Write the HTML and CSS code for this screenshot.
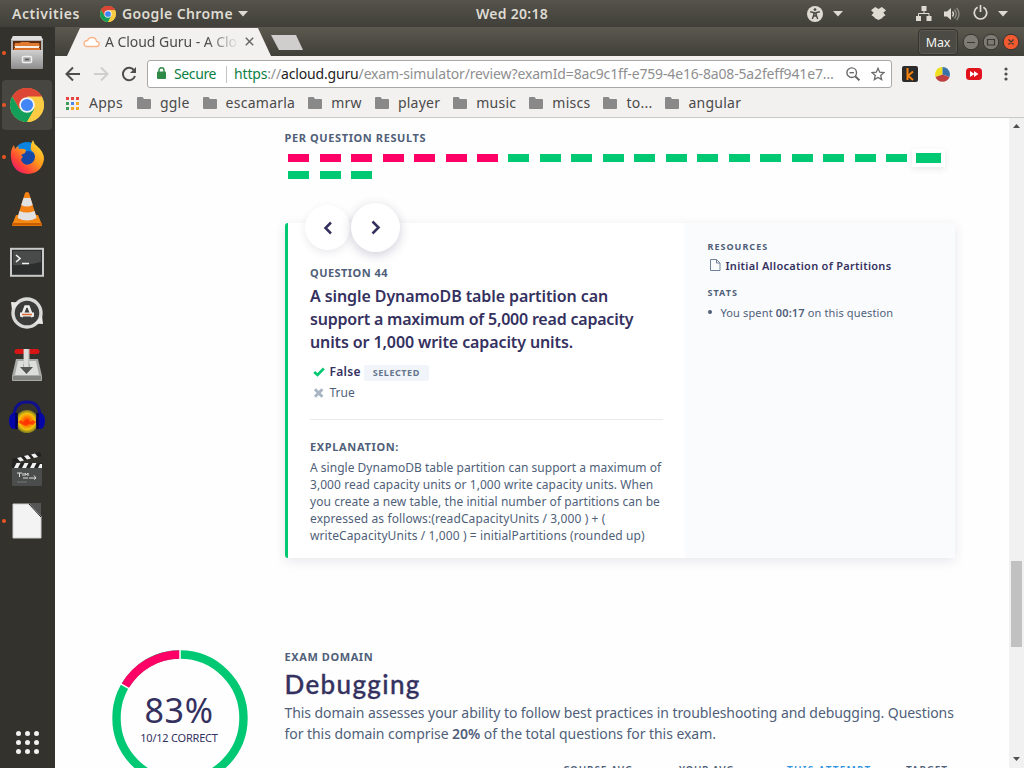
FILE: index.html
```html
<!DOCTYPE html>
<html lang="en">
<head>
<meta charset="utf-8">
<title>A Cloud Guru - A Cloud Guru</title>
<link rel="stylesheet" href="styles.css">
</head>
<body>
<svg class="defs" width="0" height="0">
  <symbol id="chrome" viewBox="0 0 34 34">
    <circle cx="17" cy="17" r="17" fill="#fccb44"/>
    <path d="M17 17 2.3 8.5A17 17 0 0 1 31.7 8.5Z" fill="#dd4535"/>
    <path d="M17 8.5H31.7A17 17 0 0 0 2.3 8.5L9.6 21.2Z" fill="#dd4535"/>
    <path d="M2.3 8.5A17 17 0 0 0 17 34L24.4 21.2 17 17 9.6 21.2Z" fill="#139f59"/>
    <path d="M17 34A17 17 0 0 0 31.7 8.5H17L24.4 21.2Z" fill="#fccb44"/>
    <circle cx="17" cy="17" r="7.8" fill="#f3f3f3"/>
    <circle cx="17" cy="17" r="6.1" fill="#4285f4"/>
  </symbol>
  <symbol id="folder" viewBox="0 0 14 12"><path d="M1 0h4.6L7 2h6q1 0 1 1v8q0 1-1 1H1q-1 0-1-1V1q0-1 1-1Z" fill="#898989"/></symbol>
</svg>

<header class="topbar">
  <span class="activities">Activities</span>
  <svg class="app-icon" width="16" height="16"><use href="#chrome"/></svg>
  <span class="app-name">Google Chrome</span>
  <svg class="caret" width="10" height="6"><path d="M0 0h10L5 5.5Z"/></svg>
  <span class="clock">Wed 20:18</span>
  <svg class="access" width="16" height="16" viewBox="0 0 16 16"><circle cx="8" cy="8" r="8" fill="#dfdbd2"/><circle cx="8" cy="3.6" r="1.4" fill="#4a4943"/><path d="M3.2 5.8 6.8 6.6V9L5.3 13M12.8 5.8 9.2 6.6V9L10.7 13M7 7h2v3H7Z" fill="none" stroke="#4a4943" stroke-width="1.4"/></svg>
  <svg class="caret caret-access" width="10" height="6"><path d="M0 0h10L5 5.5Z"/></svg>
  <svg class="dropbox" width="15" height="13" viewBox="0 0 15 13"><path d="M4.200 0 7.500 2 10.800 0 15 3.200 12.300 5.700 14.500 8.200 11.500 10.200V11L7.500 13 3.500 11V10.200L.5 8.200 2.700 5.700 0 3.200Z" fill="#dfdbd2"/></svg>
  <svg class="network" width="16" height="15" viewBox="0 0 16 15"><path d="M5.500 0h5v5h-5ZM0 10h5v5H0ZM10.500 10h5v5h-5Z" fill="#dfdbd2"/><path d="M8 5v2.500M2.500 10V7.500h10.500V10" fill="none" stroke="#dfdbd2"/></svg>
  <svg class="volume" width="16" height="14" viewBox="0 0 16 14"><path d="M0 4.500h3L7 1v12L3 9.500H0Z" fill="#dfdbd2"/><path d="M8.500 4.500q2 2.500 0 5" fill="none" stroke="#dfdbd2" stroke-width="1.300"/><path d="M10.500 2.500q3.500 4.500 0 9M12.700 .8q4.600 6.200 0 12.400" fill="none" stroke="#918f89" stroke-width="1.300"/></svg>
  <svg class="power" width="15" height="15" viewBox="0 0 15 15"><path d="M4.600 2.300a6.200 6.200 0 1 0 5.800 0M7.500 0v7" fill="none" stroke="#dfdbd2" stroke-width="1.700"/></svg>
  <svg class="caret caret-power" width="10" height="6"><path d="M0 0h10L5 5.500Z"/></svg>
</header>

<div class="desktop">
  <nav class="dock">
    <div class="tile running"><svg width="34" height="36" viewBox="0 0 34 36">
      <defs><linearGradient id="gm" x2="0" y2="1"><stop offset="0" stop-color="#d0d0d0"/><stop offset="1" stop-color="#8d8d8d"/></linearGradient></defs>
      <path d="M3 1h28l2 4v27q0 2-2 2H3q-2 0-2-2V5Z" fill="#b5b5b5"/><path d="M3 1h28l2 4H1Z" fill="#dedede"/>
      <rect x="3" y="6" width="28" height="9" fill="#5c2c12"/><path d="M4 12l1-4h5l1-1h8l1 1h9l1 4Z" fill="#e07a30"/><path d="M5 11h24v2H5Z" fill="#f6f0e8"/><path d="M4 13h26v2H4Z" fill="#d96f28"/>
      <path d="M1 15h32v17q0 2-2 2H3q-2 0-2-2Z" fill="url(#gm)"/><rect x="12.500" y="21.500" width="9" height="6" rx="1" fill="#aaa" stroke="#eee" stroke-width="1.500"/><path d="M15 24.500h4" stroke="#555" stroke-width="1.500"/></svg></div>
    <div class="tile running active"><svg width="34" height="34"><use href="#chrome"/></svg></div>
    <div class="tile running"><svg width="34" height="36" viewBox="0 0 34 36">
      <defs><linearGradient id="ff" x1="1" x2=".1" y2="1"><stop offset="0" stop-color="#fff33e"/><stop offset=".45" stop-color="#ff9a1b"/><stop offset=".75" stop-color="#ff4038"/><stop offset="1" stop-color="#e5117c"/></linearGradient></defs>
      <circle cx="17" cy="16.500" r="13.500" fill="#0a84e0"/><circle cx="18" cy="20" r="8" fill="#1448a8"/>
      <path d="M1 19Q0 11 4 6l1 4 3-3 1 3q4-1 7 1l-1 3-4 2 2 2q-3 2-1 5 3 4 8 2 5-2 5-8-1-4-4-6-1-5 2-10 1 4 4 6Q34 13 34 20 32 34 18 35 3 34 1 19Z" fill="url(#ff)"/></svg></div>
    <div class="tile"><svg width="32" height="36" viewBox="0 0 32 36">
      <path d="M5 24h22l4 10q0 1-1 1H2q-1 0-1-1Z" fill="#f58a13"/><path d="M14 2q2-2 4 0l8 26q-10 5-20 0Z" fill="#f58214"/>
      <path d="M12.500 7h7l2.200 7q-6 3-11.500 0ZM8.400 20q7.500 3 15.200 0l2 7q-9.500 5-19 0Z" fill="#e2e2e2"/><path d="M1 32h30v2.500H1Z" fill="#c95e00"/></svg></div>
    <div class="tile low"><svg width="34" height="30" viewBox="0 0 34 30">
      <rect x="1" y="1.800" width="32" height="27" fill="#2b2e2d" stroke="#c9c9c9" stroke-width="2"/><path d="M3 4h28v11q-14 4-28 3Z" fill="#484b4a"/><path d="m6 8 4 3.500L6 15M12 16.500h7" fill="none" stroke="#f2f2f2" stroke-width="1.600"/></svg></div>
    <div class="tile"><svg width="34" height="34" viewBox="0 0 34 34">
      <circle cx="17" cy="17" r="14" fill="#3c3c3a" stroke="#d9d9d7" stroke-width="3.400"/><path d="M1 6 10 6.500 2 14ZM33 28l-9-.500 8-7.500Z" fill="#e8e8e6"/>
      <path d="m11.500 21 4-10.500h3l4 10.500" fill="none" stroke="#eee" stroke-width="2.600"/><path d="M10 18.500h14" stroke="#eee" stroke-width="4"/><path d="M12 18.500h10" stroke="#e06a30" stroke-width="1.500"/></svg></div>
    <div class="tile"><svg width="32" height="34" viewBox="0 0 32 34">
      <path d="M5 11h22l4 17v4q0 1-1 1H2q-1 0-1-1v-4Z" fill="#a8aaa7"/><path d="m7 13h18l3 14H4Z" fill="#dcdedb"/><path d="M2 28h28v4H2Z" fill="#82847f"/>
      <rect x="3.500" y="1" width="25" height="5" rx="2.500" fill="#d81414"/><path d="M9 19h3.500v-3h6v3H22l-6.500 7Z" fill="#535653"/><path d="M12.500 1h6v18h-6Z" fill="#c0c2bf"/><path d="M13 1h4v18h-4Z" fill="#dcdddb"/></svg></div>
    <div class="tile"><svg width="36" height="34" viewBox="0 0 36 34">
      <defs><radialGradient id="au"><stop offset="0" stop-color="#ff3000"/><stop offset=".35" stop-color="#ff7200"/><stop offset=".7" stop-color="#f2c40c"/><stop offset="1" stop-color="#c9ba14" stop-opacity=".5"/></radialGradient></defs>
      <path d="M5 17Q5 2 18 2t13 15" fill="none" stroke="#10108c" stroke-width="3"/><ellipse cx="18" cy="21.500" rx="11.500" ry="11.500" fill="url(#au)"/>
      <path d="m9 22 3-2 2 2 4-3 3 3 3-2 3 2-3 3-4-1-3 2-5-2Z" fill="#ff2a00" opacity=".75"/><ellipse cx="4.500" cy="21" rx="4.500" ry="8" fill="#0606a8"/><ellipse cx="31.500" cy="21" rx="4.500" ry="8" fill="#0606a8"/><path d="M7.500 13v16M28.500 13v16" stroke="#02024c" stroke-width="2.500"/></svg></div>
    <div class="tile"><svg width="32" height="36" viewBox="0 0 32 36">
      <rect x="1" y="13" width="30" height="22" rx="1.500" fill="#4b4d4c"/><path d="m1 8 28-7 1.500 4L2 12Z" fill="#222"/><path d="m6 7 4-1 3 3.500-4 1ZM13 5l4-1 3 3.500-4 1ZM20 3.500l4-1 3 3.500-4 1Z" fill="#f2f2f2"/>
      <rect x="1" y="12" width="30" height="5" fill="#222"/><path d="M3 17l2.500-5h4L7 17ZM11 17l2.500-5h4L15 17ZM19 17l2.500-5h4L23 17ZM27 17l2-4h2v4Z" fill="#f2f2f2"/>
      <path d="M6 22h5M8.500 22v4M12 22v3M14 25v-3l1.500 2 1.500-2v3M18 27h7l-2-2.500m2 2.500-2 1.500M17 27h-5" fill="none" stroke="#ddd"/><path d="M6 31h10" stroke="#777"/></svg></div>
    <div class="tile running"><svg width="30" height="36" viewBox="0 0 30 36">
      <path d="M1 1h17l11 12v22H1Z" fill="#f3f3f3" stroke="#cfcfcf"/><path d="M17 0h12v13Z" fill="#555"/><path d="M17 1l12 13" stroke="#222"/></svg></div>
    <div class="show-apps"><i></i><i></i><i></i><i></i><i></i><i></i><i></i><i></i><i></i></div>
  </nav>

  <section class="browser">
    <div class="tabstrip">
      <div class="tab">
        <svg width="17" height="12" viewBox="0 0 17 12"><path d="M3.800 10.500h9.700q2.700-.3 2.700-2.600 0-2.200-2.700-2.600Q13 1.500 8.800 1.500 5.300 1.500 4.600 4.500 1 4.700 1 7.500 1 10.300 3.800 10.500Z" fill="#fff" stroke="#fbb58a" stroke-width="1.300"/></svg>
        <span class="tab-title">A Cloud Guru - A Clo</span>
        <svg width="9" height="9" viewBox="0 0 9 9"><path d="m.8.8 7.400 7.400m0-7.400L.8 8.200" stroke="#686764" stroke-width="1.500"/></svg>
      </div>
      <div class="new-tab"></div>
      <div class="user">Max</div>
      <svg class="win" width="58" height="18" viewBox="0 0 58 18">
        <g stroke="#363530"><circle cx="9" cy="9" r="7.800" fill="#7d7b73"/><circle cx="29" cy="9" r="7.800" fill="#7d7b73"/><circle cx="49" cy="9" r="7.800" fill="#f15a30"/></g>
        <path d="M5 9.500h8M25.500 6.500h7v5.500h-7ZM46.500 6.500l5 5m0-5-5 5" fill="none" stroke="#393833" stroke-width="1.200"/></svg>
    </div>

    <div class="toolbar">
      <svg width="72" height="16" viewBox="0 0 72 16" fill="none" stroke="#4e4e4d" stroke-width="2">
        <path d="M15 8H2M8 1.500 1.500 8 8 14.500"/><path d="M29 8h13M36 1.500 42.500 8 36 14.500" stroke="#cfcecd"/>
        <path d="M69.300 4.600A6.200 6.200 0 1 0 70 10"/><path d="M71 1v6h-6Z" fill="#4e4e4d" stroke="none"/></svg>
      <div class="omnibox">
        <svg class="lock" width="9" height="12" viewBox="0 0 9 12"><rect y="4.500" width="9" height="7.500" rx="1" fill="#2f8a46"/><path d="M2 5V3.200a2.500 2.500 0 0 1 5 0V5" fill="none" stroke="#2f8a46" stroke-width="1.400"/></svg>
        <span class="secure">Secure</span>
        <span class="url"><span class="scheme">https</span>://<span class="host">acloud.guru</span>/exam-simulator/review?examId=8ac9c1ff-e759-4e16-8a08-5a2feff941e7…</span>
        <svg class="lens" width="14" height="14" viewBox="0 0 14 14" fill="none" stroke="#6b6b6b" stroke-width="1.400"><circle cx="5.700" cy="5.700" r="4.800"/><path d="M3.500 5.700h4.400"/><path d="m9.200 9.200 4.200 4.200" stroke-width="2"/></svg>
        <svg width="14" height="14" viewBox="0 0 14 14"><path d="m7 1.300 1.700 3.900 4.200.4-3.200 2.800 1 4.200L7 10.400l-3.700 2.200 1-4.200L1.100 5.600l4.200-.4Z" fill="none" stroke="#6b6b6b" stroke-width="1.300"/></svg>
      </div>
      <svg class="ext" width="82" height="16" viewBox="0 0 82 16">
        <rect width="16" height="16" rx="2" fill="#2b2b2b"/><path d="M5.500 2v12M11 5.500 6 9.700l5 4.300" fill="none" stroke="#f5820c" stroke-width="2"/>
        <path d="M40.500 8.500V1A7.500 7.500 0 0 0 33.500 11Z" fill="#f0df1f"/><path d="M40.500 8.500V1A7.500 7.500 0 0 1 47.500 11Z" fill="#3874a9"/><path d="M40.500 8.500 33.500 11A7.500 7.500 0 0 0 47.500 11Z" fill="#bf4040"/>
        <rect x="64" y="2" width="16" height="12" rx="3.500" fill="#e0131d"/><path d="m68 5 4.500 3-4.500 3ZM72 5l4.500 3-4.500 3Z" fill="#fff"/></svg>
      <svg class="more" width="4" height="14" fill="#4f4f4e"><circle cx="2" cy="2" r="1.600"/><circle cx="2" cy="7" r="1.600"/><circle cx="2" cy="12" r="1.600"/></svg>
    </div>

    <div class="bookmarks">
      <span class="bm apps"><svg width="13" height="13"><g fill="#e8433f"><rect width="3" height="3"/><rect x="5" width="3" height="3"/><rect x="10" width="3" height="3"/></g><rect y="5" width="3" height="3" fill="#3c9e57"/><rect x="5" y="5" width="3" height="3" fill="#4a86e8"/><rect x="10" y="5" width="3" height="3" fill="#f5a623"/><rect y="10" width="3" height="3" fill="#3c9e57"/><rect x="5" y="10" width="3" height="3" fill="#f5a623"/><rect x="10" y="10" width="3" height="3" fill="#f5a623"/></svg>Apps</span>
      <span class="bm"><svg width="14" height="12"><use href="#folder"/></svg>ggle</span>
      <span class="bm"><svg width="14" height="12"><use href="#folder"/></svg>escamarla</span>
      <span class="bm"><svg width="14" height="12"><use href="#folder"/></svg>mrw</span>
      <span class="bm"><svg width="14" height="12"><use href="#folder"/></svg>player</span>
      <span class="bm"><svg width="14" height="12"><use href="#folder"/></svg>music</span>
      <span class="bm"><svg width="14" height="12"><use href="#folder"/></svg>miscs</span>
      <span class="bm"><svg width="14" height="12"><use href="#folder"/></svg>to...</span>
      <span class="bm"><svg width="14" height="12"><use href="#folder"/></svg>angular</span>
    </div>

    <div class="viewport">
      <main class="page">
        <section class="results">
          <h4 class="label">PER QUESTION RESULTS</h4>
          <div class="bars">
            <i class="bar miss"></i><i class="bar miss"></i><i class="bar miss"></i><i class="bar miss"></i><i class="bar miss"></i><i class="bar miss"></i><i class="bar miss"></i>
            <i class="bar"></i><i class="bar"></i><i class="bar"></i><i class="bar"></i><i class="bar"></i><i class="bar"></i><i class="bar"></i><i class="bar"></i><i class="bar"></i><i class="bar"></i><i class="bar"></i><i class="bar"></i><i class="bar"></i><i class="bar current"></i>
            <i class="bar"></i><i class="bar"></i><i class="bar"></i>
          </div>
        </section>

        <article class="card">
          <div class="pager">
            <span class="round prev"><svg width="10" height="14" viewBox="0 0 10 14"><path d="M8 1.500 2.500 7l5.500 5.500"/></svg></span>
            <span class="round next"><svg width="11" height="16" viewBox="0 0 11 16"><path d="m2.500 1.500 6 6-6 6"/></svg></span>
          </div>
          <div class="question">
            <h4 class="label">QUESTION 44</h4>
            <h2 class="prompt"><span class="t1">A single DynamoDB table partition can</span><span class="t2">support a maximum of 5,000 read capacity</span><span class="t3">units or 1,000 write capacity units.</span></h2>
            <div class="answer right"><svg width="12" height="10" viewBox="0 0 12 10"><path d="m1.200 5 3.300 3L10.800 1.500" fill="none" stroke="#00c873" stroke-width="2.600"/></svg><b>False</b><span class="tag">SELECTED</span></div>
            <div class="answer"><svg width="12" height="10" viewBox="0 0 12 10"><path d="m2 1.300 7.400 7.400m0-7.400L2 8.700" stroke="#a9b5c2" stroke-width="3"/></svg><span>True</span></div>
            <hr>
            <h4 class="label expl">EXPLANATION:</h4>
            <p class="body"><span class="e1">A single DynamoDB table partition can support a maximum of</span><span class="e2">3,000 read capacity units or 1,000 write capacity units. When</span><span class="e2">you create a new table, the initial number of partitions can be</span><span class="e3">expressed as follows:(readCapacityUnits / 3,000 ) + (</span><span class="e3">writeCapacityUnits / 1,000 ) = initialPartitions (rounded up)</span></p>
          </div>
          <aside class="side">
            <h5 class="mini">RESOURCES</h5>
            <div class="resource"><svg width="11" height="12" viewBox="0 0 11 12"><path d="M.5.500h6l3.500 3.500v7.500H.5ZM6.500.5V4H10" fill="none" stroke="#70819a"/></svg><b>Initial Allocation of Partitions</b></div>
            <h5 class="mini stats">STATS</h5>
            <div class="stat"><i></i><span>You spent <b>00:17</b> on this question</span></div>
          </aside>
        </article>

        <section class="domain">
          <div class="score">
            <svg class="ring" width="136" height="136" viewBox="0 0 136 136" fill="none" stroke-width="8.400">
              <circle cx="68" cy="68" r="63.500" stroke="#00c873"/>
              <path d="M13 36.250A63.500 63.500 0 0 1 68 4.500" stroke="#ff0066"/>
              <path d="M68 0v10M8 33.400l10 5.700" stroke="#fff" stroke-width="1.500"/></svg>
            <div class="score-text"><span class="pct">83%</span><span class="frac">10/12 CORRECT</span></div>
          </div>
          <div class="detail">
            <h4 class="label domain-label">EXAM DOMAIN</h4>
            <h1 class="name">Debugging</h1>
            <p class="desc"><span class="d1">This domain assesses your ability to follow best practices in troubleshooting and debugging. Questions</span><span class="d2">for this domain comprise <b>20%</b> of the total questions for this exam.</span></p>
            <div class="cols"><span>COURSE AVG</span><span>YOUR AVG</span><span class="attempt">THIS ATTEMPT</span><span>TARGET</span></div>
          </div>
        </section>
      </main>
      <div class="scrollbar"><svg width="7" height="4"><path d="M0 4 3.500 0 7 4Z" fill="#505050"/></svg><div class="thumb"></div><svg width="7" height="4"><path d="M0 0h7L3.500 4Z" fill="#505050"/></svg></div>
    </div>
  </section>
</div>
</body>
</html>
```
FILE: styles.css
```css
* { box-sizing: border-box; margin: 0; padding: 0; }
body { width: 1024px; height: 768px; overflow: hidden; font-family: "Noto Sans", "Open Sans", sans-serif; font-size: 14px; background: #fefefe; white-space: nowrap; }
svg { display: block; flex: none; }
.defs { position: absolute; }
b { font-weight: 600; }

/* Desktop top bar */
.topbar { height: 27px; display: flex; align-items: center; background: linear-gradient(#55534b, #403f39); color: #dfdbd2; font-weight: 600; padding-left: 12px; }
.activities { width: 88px; letter-spacing: .56px; }
.app-icon { margin-right: 6px; }
.app-name { width: 116px; letter-spacing: .39px; }
.caret { fill: #dfdbd2; }
.clock { margin-left: 228px; width: 331px; letter-spacing: .27px; }
.caret-access { margin-left: 10px; margin-right: 28px; }
.network { margin-left: 30px; }
.volume { margin-left: 12px; }
.power { margin-left: 13px; margin-bottom: 2px; }
.caret-power { margin-left: 10px; }

.desktop { display: flex; height: 741px; }

/* Launcher */
.dock { width: 55px; flex: none; background: #33322d; padding: 1px 2px; display: flex; flex-direction: column; gap: 2px; }
.tile { width: 50px; height: 50px; border-radius: 4px; display: flex; align-items: center; justify-content: center; position: relative; flex: none; }
.tile.active { background: #474641; }
.tile.low { padding-top: 2px; }
.running::before { content: ""; position: absolute; left: 0; top: 23px; width: 4px; height: 4px; border-radius: 50%; background: #e95420; }
.show-apps { margin: auto auto 13px 14px; display: grid; grid-template-columns: repeat(3, 5px); gap: 4px; }
.show-apps i { height: 5px; border-radius: 50%; background: #f2f2f0; }

/* Browser frame */
.browser { width: 969px; display: flex; flex-direction: column; }
.tabstrip { height: 29px; background: linear-gradient(#5b594f, #403f39); display: flex; align-items: flex-start; padding: 1px 4px 0 12px; }
.tab { width: 204px; height: 28px; background: #f2f1f0; clip-path: polygon(13px 0, 191px 0, 204px 28px, 0 28px); display: flex; align-items: center; padding: 0 0 1px 16px; color: #4c4c4c; }
.tab-title { width: 134px; margin: 0 6px 0 5px; overflow: hidden; letter-spacing: -.05px; -webkit-mask-image: linear-gradient(90deg, #000 76%, transparent 100%); mask-image: linear-gradient(90deg, #000 76%, transparent 100%); }
.new-tab { width: 32px; height: 15px; margin-top: 7px; background: #cfcecc; clip-path: polygon(0 0, 25px 0, 32px 15px, 8px 15px); }
.user { margin: 1px 4px 0 auto; width: 40px; height: 26px; border: 1px solid #33322d; border-radius: 4px; background: #4b4a44; box-shadow: inset 0 0 0 1px #5a5952; color: #f5f4f2; font-size: 12.5px; line-height: 25px; text-align: center; letter-spacing: -.2px; }
.win { margin-top: 5px; }
.toolbar { height: 35px; background: #f2f1f0; display: flex; align-items: center; padding: 1px 0 0 10px; }
.omnibox { margin-left: 10px; width: 745px; height: 28px; border: 1px solid #a8a8a8; border-radius: 3px; background: #fff; display: flex; align-items: center; padding: 0 5px 0 9px; }
.lock { margin: 0 8px 2px 0; }
.secure { color: #0b8043; width: 52px; letter-spacing: -.39px; padding-bottom: 1px; }
.url { border-left: 1px solid #c4c4c4; line-height: 16px; padding: 0 0 1px 7px; width: 620px; color: #8f8f8f; letter-spacing: -.16px; }
.scheme { color: #0b8043; }
.host { color: #222; }
.lens { margin-right: 11px; }
.ext { margin-left: 10px; }
.more { margin-left: 20px; }
.bookmarks { height: 27px; background: #f2f1f0; border-bottom: 1px solid #c9c9c8; display: flex; align-items: flex-start; padding: 2px 0 0 11px; gap: 13px; color: #4a4a4a; letter-spacing: .25px; }
.bm { display: flex; align-items: center; gap: 9px; line-height: 20px; }
.apps { gap: 10px; margin-right: 1px; }

/* Web page */
.viewport { height: 650px; display: flex; overflow: hidden; background: #fefefe; }
.page { width: 954px; padding-left: 229px; color: #505f79; }
.label { font-size: 11px; line-height: 16px; font-weight: 700; letter-spacing: .6px; }
.results { padding-top: 12px; height: 105px; }
.results .label { padding-left: .6px; }
.bars { width: 661px; margin: 8px 0 0 -1px; display: grid; grid-template-columns: repeat(21, 31.47px); row-gap: 9px; }
.bar { height: 8px; width: 21px; margin-left: 5.200px; background: #00c873; }
.miss { background: #ff0066; }
.current { width: 25.500px; height: 10px; margin: -1px 0 -1px 3.300px; box-shadow: 0 0 0 4px #fff, 0 2px 6px 4px rgba(50, 50, 93, .10); }

.card { width: 670px; height: 335px; display: flex; position: relative; margin-left: 1px; border-left: 3px solid #00c873; border-radius: 3px; background: #fff; box-shadow: 0 3px 12px rgba(50, 50, 93, .11); }
.pager { position: absolute; left: 17px; top: -20px; display: flex; align-items: center; gap: 1px; }
.round { display: flex; align-items: center; justify-content: center; border-radius: 50%; background: #fff; }
.round svg { fill: none; stroke: #35315f; stroke-width: 2.500px; }
.prev { width: 45px; height: 45px; box-shadow: 0 3px 8px rgba(50, 50, 93, .10); }
.next { width: 49px; height: 49px; box-shadow: 0 3px 11px rgba(50, 50, 93, .24); }
.question { width: 397px; padding: 42px 22px 0 22px; }
.question .label { letter-spacing: .45px; }
.prompt { color: #35315f; font-size: 16px; line-height: 23px; font-weight: 600; margin-bottom: 7px; padding-top: 4px; }
.prompt span, .body span, .desc > span { display: block; }
.t1 { letter-spacing: -.09px; }
.t2 { letter-spacing: -.21px; }
.t3 { letter-spacing: -.11px; }
.answer { height: 21px; display: flex; align-items: center; padding-left: 3px; font-size: 12px; }
.answer svg { margin-right: 4.500px; }
.answer b { color: #35315f; letter-spacing: .3px; }
.tag { margin: 3px 0 0 3px; width: 65px; height: 16px; line-height: 16px; border-radius: 2px; background: #f1f5f9; color: #64768f; font-size: 9px; font-weight: 700; letter-spacing: .55px; text-align: center; }
hr { border: 0; height: 1px; background: #e8eaed; margin: 16px 0 19px; }
.question .expl { letter-spacing: .65px; }
.body { font-size: 12px; line-height: 17px; margin-top: 4px; }
.e1 { letter-spacing: .02px; }
.e2 { letter-spacing: .06px; }
.e3 { letter-spacing: .1px; }
.side { width: 270px; background: #fafbfd; padding: 17px 0 0 22.500px; border-radius: 0 3px 3px 0; }
.mini { font-size: 9px; line-height: 13px; font-weight: 700; letter-spacing: 1.020px; }
.resource { display: flex; align-items: center; height: 16px; margin-top: 4px; padding-left: 2px; color: #35315f; font-size: 11px; letter-spacing: .28px; }
.resource svg { margin: -1px 5px 0 0; }
.stats { margin-top: 13px; }
.stat { display: flex; align-items: center; height: 16px; margin-top: 5px; font-size: 11px; letter-spacing: .14px; }
.stat i { width: 4px; height: 4px; border-radius: 50%; background: #505f79; margin-right: 9px; }

.domain { display: flex; margin-left: -172.500px; padding-top: 91px; }
.score { width: 173px; display: grid; padding-top: 1px; }
.ring, .score-text { grid-area: 1 / 1; }
.score-text { width: 135px; display: flex; flex-direction: column; align-items: center; color: #35315f; padding-top: 44px; }
.pct { font-size: 34px; line-height: 33px; letter-spacing: .7px; }
.frac { font-size: 11px; line-height: 15px; letter-spacing: -.22px; margin-top: 3px; }
.domain-label { letter-spacing: .58px; }
.name { font-family: Lato, "Noto Sans", sans-serif; font-size: 26px; font-weight: 500; line-height: 30px; letter-spacing: 1.350px; color: #35315f; -webkit-text-stroke: .35px #35315f; margin: 4px 0 3px; }
.desc { line-height: 21px; }
.d1 { letter-spacing: -.075px; }
.d2 { letter-spacing: -.05px; }
.cols { display: flex; margin: 18px 0 0 278.500px; font-size: 10px; line-height: 16px; font-weight: 600; letter-spacing: .86px; }
.cols span:nth-child(1) { width: 116px; }
.cols span:nth-child(2) { width: 108px; letter-spacing: .63px; }
.cols .attempt { width: 119px; letter-spacing: 1.260px; color: #2f94de; }
.scrollbar { width: 15px; background: #f1f1f1; display: flex; flex-direction: column; align-items: center; padding: 6px 0 7px; }
.thumb { width: 11px; height: 86px; background: #c1c1c1; margin: 433px 0 auto; }
```
